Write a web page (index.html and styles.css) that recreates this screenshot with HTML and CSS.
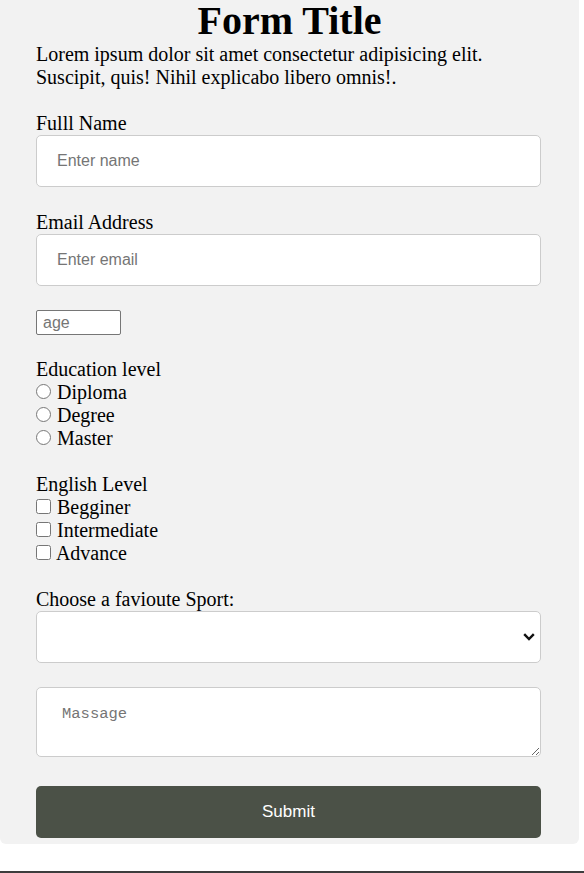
FILE: index.html
```html
<!DOCTYPE html>
<html lang="en">
<head>
<meta charset="utf-8">
<title>Form</title>
<link rel="stylesheet" href="styles.css">
</head>
<body>
<form class="form-card">
  <h1 class="title">Form Title</h1>
  <p class="intro">Lorem ipsum dolor sit amet consectetur adipisicing elit.<br>Suscipit, quis! Nihil explicabo libero omnis!.</p>

  <div class="field field-first">
    <label class="label" for="name">Fulll Name</label>
    <input class="text-input" id="name" type="text" placeholder="Enter name">
  </div>

  <div class="field">
    <label class="label" for="email">Email Address</label>
    <input class="text-input" id="email" type="email" placeholder="Enter email">
  </div>

  <div class="age-row">
    <input class="age-input" type="number" placeholder="age">
  </div>

  <div class="group group-first">
    <div class="label">Education level</div>
    <label class="option"><input class="radio" type="radio" name="edu"> Diploma</label>
    <label class="option"><input class="radio" type="radio" name="edu"> Degree</label>
    <label class="option"><input class="radio" type="radio" name="edu"> Master</label>
  </div>

  <div class="group">
    <div class="label">English Level</div>
    <label class="option"><input class="check" type="checkbox"> Begginer</label>
    <label class="option"><input class="check" type="checkbox"> Intermediate</label>
    <label class="option"><input class="check" type="checkbox"> Advance</label>
  </div>

  <div class="group">
    <label class="label" for="sport">Choose a favioute Sport:</label>
    <div class="select-wrap">
      <select class="select" id="sport">
        <option></option>
      </select>
      <svg class="chevron" width="12" height="8" viewBox="0 0 12 8" aria-hidden="true">
        <path d="M1.2 1.2 L6 6 L10.8 1.2" fill="none" stroke="#111" stroke-width="2.4" stroke-linecap="butt" stroke-linejoin="miter"/>
      </svg>
    </div>
  </div>

  <textarea class="message" placeholder="Massage"></textarea>

  <button class="submit" type="button">Submit</button>
</form>
<div class="rule"></div>
</body>
</html>
```

FILE: styles.css
```css
html, body {
  margin: 0;
  padding: 0;
  background: #ffffff;
}

body {
  font-family: "Liberation Serif", "Times New Roman", serif;
  font-size: 20px;
  line-height: 23px;
  color: #000;
}

.form-card {
  width: 579px;
  box-sizing: border-box;
  background: #f2f2f2;
  border-radius: 0 0 6px 6px;
  padding: 0 38px 6px 36px;
}

.title {
  margin: 0 -2px 0 0;
  font-size: 40px;
  line-height: 42px;
  font-weight: bold;
  text-align: center;
}

.intro {
  margin: 0;
  padding-top: 1px;
}

.field {
  margin-top: 23px;
}

.field-first {
  margin-top: 22px;
}

.label {
  display: block;
  height: 22px;
  padding-top: 1px;
}

.text-input {
  display: block;
  box-sizing: border-box;
  width: 505px;
  height: 52px;
  margin: 1px 0 0 0;
  padding: 0 20px;
  border: 1px solid #cccccc;
  border-radius: 5px;
  background: #ffffff;
  font-family: "Liberation Sans", Arial, sans-serif;
  font-size: 16px;
  color: #000;
}

.text-input::placeholder {
  color: #757575;
}

.age-row {
  margin-top: 24px;
  height: 25px;
}

.age-input {
  display: block;
  box-sizing: border-box;
  width: 85px;
  height: 25px;
  margin: 0;
  padding: 1px 6px;
  border: 1px solid #767676;
  border-radius: 2px;
  background: #ffffff;
  font-family: "Liberation Sans", Arial, sans-serif;
  font-size: 16px;
}

.age-input::placeholder {
  color: #757575;
}

.age-input::-webkit-inner-spin-button,
.age-input::-webkit-outer-spin-button {
  -webkit-appearance: none;
  margin: 0;
}

.group {
  margin-top: 23px;
}

.group-first {
  margin-top: 22px;
}

.option {
  display: block;
  height: 22px;
  padding-top: 1px;
}

.radio,
.check {
  width: 15px;
  height: 15px;
  margin: 0 1px 0 0;
  vertical-align: baseline;
}

.select-wrap {
  position: relative;
  margin-top: 1px;
}

.select {
  display: block;
  box-sizing: border-box;
  width: 505px;
  height: 52px;
  margin: 0;
  padding: 0 20px;
  border: 1px solid #cccccc;
  border-radius: 5px;
  background: #ffffff;
  -webkit-appearance: none;
  appearance: none;
  font-family: "Liberation Sans", Arial, sans-serif;
  font-size: 16px;
  color: #000;
}

.chevron {
  position: absolute;
  right: 6px;
  top: 22px;
  pointer-events: none;
}

.message {
  display: block;
  box-sizing: border-box;
  width: 505px;
  height: 70px;
  margin: 24px 0 0 0;
  padding: 17px 25px 15px;
  border: 1px solid #cccccc;
  border-radius: 5px;
  background: #ffffff;
  font-family: "Liberation Mono", "Courier New", monospace;
  font-size: 15.5px;
}

.message::placeholder {
  color: #757575;
}

.submit {
  display: block;
  box-sizing: border-box;
  width: 505px;
  height: 52px;
  margin: 29px 0 0 0;
  padding: 0;
  border: none;
  border-radius: 5px;
  background: #4b5147;
  color: #ffffff;
  font-family: "Liberation Sans", Arial, sans-serif;
  font-size: 17px;
}

.rule {
  margin-top: 27px;
  border-top: 2px solid #3d3d3d;
}
```
